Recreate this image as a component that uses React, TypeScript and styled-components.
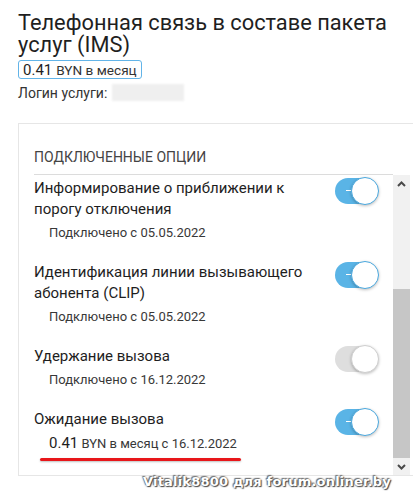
import * as React from 'react';
import styled, { createGlobalStyle } from 'styled-components';

const GlobalStyle = createGlobalStyle`
    body {
        margin: 0;
        background: #fff;
        font-family: Roboto, 'Liberation Sans', sans-serif;
        overflow: hidden;
    }
`;

type Option = {
    title: string;
    on: boolean;
    date: string;
    price?: string;
};

const options: Option[] = [
    { title: 'Информирование о приближении к порогу отключения', on: true, date: '05.05.2022' },
    { title: 'Идентификация линии вызывающего абонента (CLIP)', on: true, date: '05.05.2022' },
    { title: 'Удержание вызова', on: false, date: '16.12.2022' },
    { title: 'Ожидание вызова', on: true, date: '16.12.2022', price: '0.41' },
];

const Chevron = ({ down }: { down?: boolean }) => (
    <svg width="9" height="6" viewBox="0 0 9 6">
        <polyline
            points={down ? '1,1 4.5,4.5 8,1' : '1,5 4.5,1.5 8,5'}
            fill="none"
            stroke="#4a4a4a"
            strokeWidth="2"
        />
    </svg>
);

export default () => {
    return (
        <Page>
            <GlobalStyle />
            <Title>Телефонная связь в составе пакета услуг (IMS)</Title>
            <Price>
                <b>0.41</b> BYN в месяц
            </Price>
            <Login>
                Логин услуги: <Hidden />
            </Login>

            <Card>
                <Header>Подключенные опции</Header>
                <Body>
                    <List>
                        {options.map((o, i) => (
                            <Row key={i}>
                                <div>
                                    <OptionTitle>{o.title}</OptionTitle>
                                    {o.price ? (
                                        <Sub>
                                            <Marked>
                                                <b>{o.price}</b> BYN в месяц с {o.date}
                                            </Marked>
                                        </Sub>
                                    ) : (
                                        <Sub>Подключено с {o.date}</Sub>
                                    )}
                                </div>
                                <Switch on={o.on}>
                                    <Knob on={o.on} />
                                </Switch>
                            </Row>
                        ))}
                    </List>
                    <Scrollbar>
                        <ArrowBtn>
                            <Chevron />
                        </ArrowBtn>
                        <Track>
                            <Thumb />
                        </Track>
                        <ArrowBtn>
                            <Chevron down />
                        </ArrowBtn>
                    </Scrollbar>
                </Body>
            </Card>
            <Watermark>Vitalik8800 для forum.onliner.by</Watermark>
        </Page>
    );
};

const Page = styled.div`
    position: relative;
    height: 499px;
    padding: 12px 0 0 18px;
    box-sizing: border-box;
`;

const Title = styled.h1`
    margin: 0;
    width: 385px;
    font: 400 21.8px/22px Roboto, sans-serif;
    color: #1f1f1f;
`;

const Price = styled.div`
    display: inline-flex;
    align-items: center;
    height: 19px;
    margin-top: 4px;
    padding: 0 4px 0 4px;
    border: 1px solid #62b4e8;
    border-radius: 3px;
    font-size: 13.6px;
    color: #333;
    box-sizing: border-box;
    > b {
        font-weight: 400;
        font-size: 15px;
        color: #1f1f1f;
        margin-right: 4px;
    }
`;

const Login = styled.div`
    display: flex;
    align-items: center;
    gap: 5px;
    margin-top: 4px;
    height: 19px;
    font-size: 14px;
    color: #333;
`;

const Hidden = styled.span`
    display: inline-block;
    width: 72px;
    height: 17px;
    background: #efefef;
    filter: blur(1px);
`;

const Card = styled.div`
    margin-top: 21px;
    width: 400px;
    border: 1px solid #e6e6e6;
    border-right: none;
    padding: 0 8px 0 15px;
    box-sizing: border-box;
`;

const Header = styled.div`
    margin-right: 17px;
    padding: 24px 0 8px;
    border-bottom: 1px solid #dcdcdc;
    font: 400 14px/18px Roboto, sans-serif;
    text-transform: uppercase;
    color: #444;
`;

const Body = styled.div`
    display: flex;
    height: 300px;
`;

const List = styled.div`
    flex: 1;
    overflow: hidden;
    padding: 3px 15px 0 0;
    display: flex;
    flex-direction: column;
    gap: 20px;
`;

const Row = styled.div`
    display: grid;
    grid-template-columns: 1fr 43px;
    column-gap: 20px;
    align-items: start;
`;

const OptionTitle = styled.div`
    font: 400 15px/21px Roboto, sans-serif;
    color: #1e1e1e;
`;

const Sub = styled.div`
    margin-top: 4px;
    padding-left: 15px;
    font: 400 13px/18px Roboto, sans-serif;
    color: #383838;
    > span > b {
        font-weight: 400;
        font-size: 15px;
        color: #1e1e1e;
    }
`;

const Marked = styled.span`
    position: relative;
    &::after {
        content: '';
        position: absolute;
        left: -9px;
        right: -4px;
        bottom: -10px;
        height: 3px;
        border-radius: 2px;
        background: #e8161a;
        box-shadow: 0 1px 2px rgba(0, 0, 0, 0.25);
    }
`;

const Switch = styled.div<{ on: boolean }>`
    position: relative;
    width: 43px;
    height: 26px;
    margin-top: 0;
    border-radius: 13px;
    background: ${({ on }) => (on ? '#5ab4e6' : '#dedede')};
    &::before {
        content: '';
        display: ${({ on }) => (on ? 'block' : 'none')};
        position: absolute;
        left: 11px;
        top: 12px;
        width: 6px;
        height: 1px;
        background: #fff;
    }
`;

const Knob = styled.div<{ on: boolean }>`
    position: absolute;
    right: -1px;
    top: -1px;
    width: 28px;
    height: 28px;
    border-radius: 50%;
    background: #fff;
    border: 1px solid ${({ on }) => (on ? '#4aa8de' : '#cfcfcf')};
    box-sizing: border-box;
    box-shadow: 0 1px 3px rgba(0, 0, 0, 0.25);
`;

const Scrollbar = styled.div`
    width: 17px;
    display: flex;
    flex-direction: column;
    background: #f1f1f1;
`;

const ArrowBtn = styled.div`
    height: 17px;
    display: flex;
    align-items: center;
    justify-content: center;
`;

const Track = styled.div`
    flex: 1;
    display: flex;
    flex-direction: column;
    justify-content: flex-end;
`;

const Thumb = styled.div`
    height: 169px;
    background: #c6c6c6;
`;

const Watermark = styled.div`
    position: absolute;
    right: 22px;
    top: 474px;
    font: 700 13px 'DejaVu Sans', Verdana, sans-serif;
    color: #fff;
    letter-spacing: 0.2px;
    text-shadow: 0 0 2px #555, 1px 1px 1px #444, -1px -1px 1px #777;
`;
